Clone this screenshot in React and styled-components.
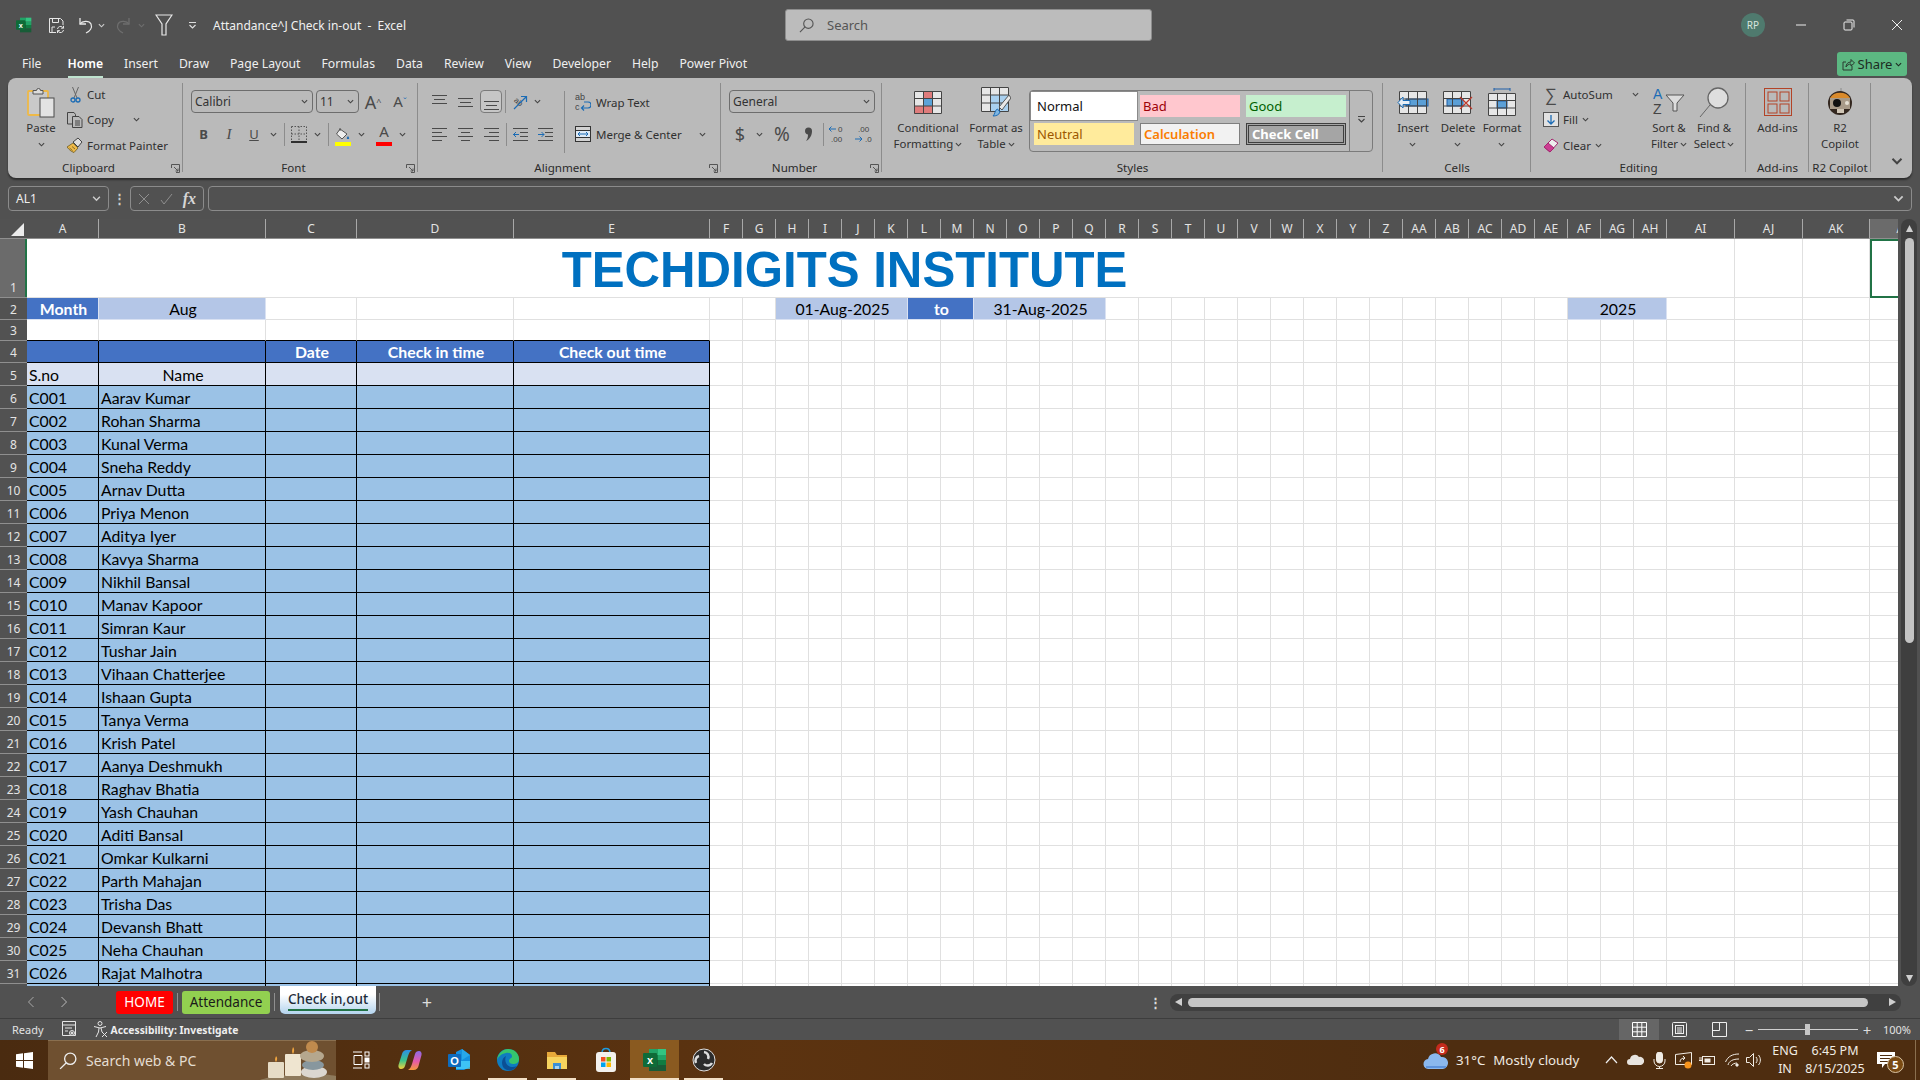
import React from 'react'
import styled, { createGlobalStyle, css } from 'styled-components'

const UI = '"Noto Sans", "Open Sans", sans-serif'
const CELL = 'Lato, "Noto Sans", sans-serif'

const GlobalStyle = createGlobalStyle`
  html, body { margin: 0; padding: 0; background: #515151; }
  * { box-sizing: border-box; }
  svg { display: block; flex: none; }
`

/* ---------- shell ---------- */
const Page = styled.div`
  width: 1920px;
  height: 1080px;
  overflow: hidden;
  display: flex;
  flex-direction: column;
  background: #515151;
  font-family: ${UI};
  font-size: 12px;
  color: #222;
`

const TitleBar = styled.header`
  height: 50px;
  flex: none;
  display: flex;
  align-items: center;
  color: #eee;
`
const Slot = styled.div`
  width: ${p => p.$w}px;
  height: ${p => p.$h || 24}px;
  margin-left: ${p => p.$ml || 0}px;
  flex: none;
  display: flex;
  align-items: center;
  justify-content: center;
  position: relative;
`
const DocTitle = styled.div`
  width: 572px;
  flex: none;
  margin-left: 15px;
  font-size: 12px;
  color: #f0f0f0;
  white-space: pre;
`
const SearchBox = styled.div`
  width: 367px;
  height: 32px;
  flex: none;
  display: flex;
  align-items: center;
  gap: 13px;
  padding-left: 13px;
  background: #bcbcbc;
  border: 1px solid #8d8d8d;
  border-radius: 3px;
  color: #555;
  font-size: 13px;
`
const Avatar = styled.div`
  width: 24px;
  height: 24px;
  flex: none;
  margin-left: 589px;
  margin-right: 12px;
  border-radius: 50%;
  background: #4f7a6e;
  color: #d8e4df;
  font-size: 10px;
  display: flex;
  align-items: center;
  justify-content: center;
`

const TabBar = styled.nav`
  height: 28px;
  flex: none;
  display: flex;
  align-items: center;
  gap: 21px;
  padding-left: 22px;
  padding-right: 13px;
  font-size: 12.2px;
  color: #efefef;
`
const Tab = styled.div`
  position: relative;
  line-height: 24px;
  ${p => p.$active && css`
    margin-left: 5px;
    color: #fff;
    font-weight: 600;
    &::after {
      content: '';
      position: absolute;
      left: 0;
      right: 0;
      bottom: -2px;
      height: 2px;
      background: #bfe3cf;
    }
  `}
`
const ShareButton = styled.div`
  margin-left: auto;
  width: 70px;
  height: 24px;
  display: flex;
  align-items: center;
  justify-content: center;
  gap: 3px;
  border-radius: 3px;
  background: #5cb882;
  color: #1d2b22;
  font-size: 13px;
`

/* ---------- ribbon ---------- */
const Ribbon = styled.section`
  width: 1904px;
  height: 100px;
  margin-left: 8px;
  flex: none;
  display: flex;
  background: #bababa;
  border-radius: 8px;
  box-shadow: 0 2px 2px rgba(0, 0, 0, 0.45);
`
const Group = styled.div`
  position: relative;
  width: ${p => p.$w}px;
  flex: none;
  display: flex;
  flex-direction: column;
  &::after {
    content: '';
    position: absolute;
    right: 0;
    top: 5px;
    bottom: 6px;
    width: 1px;
    background: #8c8c8c;
  }
`
const GroupBody = styled.div`
  flex: 1;
  min-height: 0;
  display: flex;
  padding-left: ${p => p.$pl || 0}px;
  padding-top: ${p => p.$pt ?? 12}px;
`
const GroupLabel = styled.div`
  height: 20px;
  flex: none;
  text-align: center;
  line-height: 20px;
  font-size: 11.6px;
  color: #2b2b2b;
  white-space: nowrap;
  padding-right: ${p => p.$launcher ? 14 : 0}px;
`
const Launcher = styled.div`
  position: absolute;
  right: 3px;
  bottom: 5px;
`
const Rows = styled.div`
  display: flex;
  flex-direction: column;
  gap: ${p => p.$gap ?? 9}px;
  width: ${p => (p.$w ? `${p.$w}px` : 'auto')};
  margin-left: ${p => p.$ml || 0}px;
  margin-top: ${p => p.$mt || 0}px;
  flex: none;
`
const Row = styled.div`
  height: ${p => p.$h || 23}px;
  display: flex;
  align-items: center;
`
const SelectBox = styled.div`
  width: ${p => p.$w}px;
  height: 23px;
  margin-right: ${p => p.$mr || 0}px;
  display: flex;
  align-items: center;
  justify-content: space-between;
  padding: 0 4px 0 3px;
  background: #bababa;
  border: 1px solid #6d6d6d;
  border-radius: 4px;
  color: #333;
  font-size: 12px;
`
const ToolGlyph = styled.span`
  font-family: ${p => p.$serif ? '"Liberation Serif", serif' : UI};
  font-size: ${p => p.$size || 13}px;
  font-weight: ${p => p.$bold ? 700 : 400};
  font-style: ${p => p.$italic ? 'italic' : 'normal'};
  text-decoration: ${p => p.$under ? 'underline' : 'none'};
  color: ${p => p.$color || '#4a4a4a'};
  margin-bottom: ${p => p.$mb || 0}px;
  line-height: 1;
`
const ColorBar = styled.span`
  position: absolute;
  left: 50%;
  bottom: 0;
  transform: translateX(-50%);
  width: 16px;
  height: 4px;
  background: ${p => p.$color};
`
const ActiveBox = styled(Slot)`
  border: 1px solid #7b7b7b;
  border-radius: 4px;
  background: #c6c6c6;
  margin-left: 2px;
`
const Sep = styled.div`
  width: 1px;
  height: 23px;
  background: #8c8c8c;
`
const TallDivider = styled.div`
  width: 1px;
  height: 62px;
  margin-top: 1px;
  background: #8c8c8c;
`
const SmallAction = styled.div`
  height: ${p => p.$h || 26}px;
  display: flex;
  align-items: center;
  gap: ${p => p.$gap ?? 4}px;
  white-space: nowrap;
  font-size: 11.5px;
  color: #303030;
`
const IconCell = styled.div`
  width: ${p => p.$w || 16}px;
  display: flex;
  justify-content: center;
  flex: none;
`
const BigButton = styled.div`
  width: ${p => p.$w}px;
  margin-top: ${p => p.$mt || 0}px;
  flex: none;
  display: flex;
  flex-direction: column;
  align-items: center;
`
const BigIcon = styled.div`
  height: 36px;
  display: flex;
  align-items: center;
  justify-content: center;
`
const BigLabel = styled.div`
  font-size: 11.4px;
  line-height: 16px;
  text-align: center;
  white-space: nowrap;
  color: #303030;
  display: flex;
  flex-direction: column;
  align-items: center;
`
const LabelLine = styled.span`
  display: flex;
  align-items: center;
  justify-content: center;
  gap: 2px;
  height: 16px;
`
const Gallery = styled.div`
  width: 344px;
  height: 62px;
  margin-left: 5px;
  margin-top: 6px;
  display: flex;
  border: 1px solid #7b7b7b;
  border-radius: 4px;
`
const GalleryGrid = styled.div`
  flex: 1;
  display: grid;
  grid-template-columns: repeat(3, 100px);
  grid-template-rows: repeat(2, 22px);
  gap: 6px;
  padding: 4px 0 0 4px;
`
const GalleryMore = styled.div`
  width: 23px;
  border-left: 1px solid #7b7b7b;
  display: flex;
  justify-content: center;
  padding-top: 24px;
`
const styleCells = {
  normal: css`background: #fff; color: #111; outline: 3px solid #fff; box-shadow: 0 0 0 4px #8a8a8a;`,
  bad: css`background: #ffc7ce; color: #9c0006;`,
  good: css`background: #c6efce; color: #006100;`,
  neutral: css`background: #ffeb9c; color: #9c5700;`,
  calc: css`background: #f2f2f2; color: #fa7d00; font-weight: 600; border: 1px solid #7f7f7f;`,
  check: css`background: #a5a5a5; color: #fff; font-weight: 700; border: 3px double #3f3f3f;`,
}
const StyleCell = styled.div`
  display: flex;
  align-items: center;
  padding-left: 3px;
  font-size: 13px;
  white-space: nowrap;
  ${p => styleCells[p.$kind]}
`
const CollapseCorner = styled.div`
  margin-left: 20px;
  align-self: flex-end;
  padding-bottom: 11px;
`

/* ---------- formula bar ---------- */
const FormulaBar = styled.div`
  height: 25px;
  margin: 8px;
  flex: none;
  display: flex;
  align-items: stretch;
`
const FieldBox = styled.div`
  width: ${p => (p.$w ? `${p.$w}px` : 'auto')};
  flex: ${p => (p.$w ? 'none' : '1')};
  margin-left: ${p => p.$ml || 0}px;
  display: flex;
  align-items: center;
  justify-content: space-between;
  padding: 0 7px;
  border: 1px solid #8b8b8b;
  border-radius: 4px;
  color: #eee;
  font-size: 12px;
`
const FxGlyph = styled.span`
  font-family: "Liberation Serif", serif;
  font-style: italic;
  font-weight: 700;
  font-size: 16px;
  color: #d6d6d6;
`

/* ---------- sheet ---------- */
const SheetWrap = styled.div`
  height: 767px;
  flex: none;
  display: flex;
`
const colWidths = [72, 167, 91, 157, 196, ...Array(29).fill(33), 68, 68, 67, 68]
const rowHeights = [59, 22, 21, 22, 23, ...Array(27).fill(23)]
const SheetGrid = styled.div`
  width: 1898px;
  height: 767px;
  overflow: hidden;
  display: grid;
  grid-template-columns: 27px ${colWidths.map(w => `${w}px`).join(' ')};
  grid-template-rows: 20px ${rowHeights.map(h => `${h}px`).join(' ')};
  background: #fff;
`
const Corner = styled.div`
  background: #525252;
  display: flex;
  align-items: flex-end;
  justify-content: flex-end;
  padding: 0 3px 2px 0;
  border-bottom: 1px solid #8f8f8f;
`
const ColHead = styled.div`
  display: flex;
  align-items: center;
  justify-content: center;
  background: ${p => p.$on ? '#6b6b6b' : '#525252'};
  color: #e4e4e4;
  font-size: 12px;
  border-right: 1px solid #a8a8a8;
  border-bottom: 1px solid #8f8f8f;
`
const RowHead = styled.div`
  display: flex;
  align-items: flex-end;
  justify-content: center;
  padding-bottom: 1px;
  background: ${p => p.$on ? '#6b6b6b' : '#525252'};
  color: #e4e4e4;
  font-size: 12px;
  border-bottom: 1px solid #8f8f8f;
  ${p => p.$on && css`box-shadow: inset -2px 0 0 #217346;`}
`
const cellKinds = {
  blank: css`border-right: 1px solid #e0e0e0; border-bottom: 1px solid #e0e0e0;`,
  aboveTable: css`border-right: 1px solid #e0e0e0; border-bottom: 1px solid #000;`,
  title: css`
    justify-content: center;
    padding: 2px 5px 0 0;
    font-family: "Liberation Sans", Arial, sans-serif;
    font-size: 49.2px;
    font-weight: 700;
    color: #0070c0;
    border-bottom: 1px solid #e0e0e0;
  `,
  selected: css`box-shadow: inset 0 0 0 2px #217346;`,
  head: css`background: #4472c4; color: #fff; font-weight: 700; justify-content: center; border-right: 1px solid #d9e1f2; border-bottom: 1px solid #d9e1f2;`,
  sub: css`background: #b4c6e7; color: #000; justify-content: center; border-right: 1px solid #d9e1f2; border-bottom: 1px solid #d9e1f2;`,
  tableHead: css`background: #4472c4; color: #fff; font-weight: 700; justify-content: center; border-right: 1px solid #000; border-bottom: 1px solid #000;`,
  tableSub: css`background: #d9e1f2; color: #000; border-right: 1px solid #000; border-bottom: 1px solid #000;`,
  tableSubC: css`background: #d9e1f2; color: #000; justify-content: center; border-right: 1px solid #000; border-bottom: 1px solid #000;`,
  tableBody: css`background: #9bc2e6; color: #000; border-right: 1px solid #000; border-bottom: 1px solid #000;`,
}
const Cell = styled.div`
  grid-column: span ${p => p.$span || 1};
  display: flex;
  align-items: center;
  padding-left: 2px;
  overflow: hidden;
  white-space: nowrap;
  font-family: ${CELL};
  font-size: 15.8px;
  ${p => cellKinds[p.$kind || 'blank']}
`
const VScroll = styled.div`
  width: 22px;
  flex: none;
  position: relative;
  background: #515151;
  &::before {
    content: '';
    position: absolute;
    left: 3px;
    width: 16px;
    top: 0;
    bottom: 0;
    border-radius: 8px;
    background: #3f3f3f;
  }
`
const VThumb = styled.div`
  position: absolute;
  left: 7px;
  width: 9px;
  top: 19px;
  height: 405px;
  border-radius: 5px;
  background: #c4c4c4;
`
const VArrow = styled.div`
  position: absolute;
  left: 7px;
  ${p => p.$top ? 'top: 5px;' : 'bottom: 3px;'}
`

/* ---------- sheet tabs ---------- */
const SheetTabs = styled.div`
  height: 33px;
  flex: none;
  display: flex;
  align-items: center;
  border-bottom: 1px solid #3d3d3d;
`
const TabChip = styled.div`
  width: ${p => p.$w}px;
  height: 23px;
  margin-left: ${p => p.$ml || 0}px;
  flex: none;
  display: flex;
  align-items: center;
  justify-content: center;
  border-radius: 3px;
  font-size: 13.5px;
  background: ${p => p.$bg};
  color: ${p => p.$color};
`
const ActiveSheet = styled.div`
  width: 96px;
  height: 28px;
  margin-top: -5px;
  flex: none;
  position: relative;
  display: flex;
  justify-content: center;
  padding-top: 4px;
  border-radius: 0 0 5px 5px;
  background: linear-gradient(#ffffff 30%, #b4d4ee);
  font-size: 13.5px;
  font-weight: 500;
  color: #1e2b38;
  &::after {
    content: '';
    position: absolute;
    left: 8px;
    right: 8px;
    bottom: 3px;
    height: 2px;
    background: #217346;
  }
`
const TabDivider = styled.div`
  width: 1px;
  height: 18px;
  margin: 0 ${p => p.$r ?? 4}px 0 ${p => p.$l ?? 4}px;
  background: #8f8f8f;
  flex: none;
`
const HScroll = styled.div`
  width: 731px;
  height: 17px;
  margin-left: 5px;
  flex: none;
  display: flex;
  align-items: center;
  padding: 0 4px;
  gap: 4px;
  border-radius: 8px;
  background: #404040;
`
const HThumb = styled.div`
  flex: 1;
  height: 9px;
  border-radius: 5px;
  background: #c6c6c6;
`

/* ---------- status bar ---------- */
const StatusBar = styled.footer`
  height: 21px;
  flex: none;
  display: flex;
  align-items: center;
  padding-left: 12px;
  color: #e2e2e2;
  font-size: 11px;
`
const StatusBold = styled.span`
  font-weight: 700;
  font-size: 10.3px;
  margin-left: 3px;
  color: #eee;
`
const StatusRight = styled.div`
  margin-left: auto;
  display: flex;
  align-items: center;
`
const ViewButton = styled.div`
  width: 40px;
  height: 21px;
  flex: none;
  display: flex;
  align-items: center;
  justify-content: center;
  background: ${p => p.$on ? '#666' : 'transparent'};
`
const ZoomTrack = styled.div`
  position: relative;
  width: 100px;
  height: 1px;
  margin: 0 2px;
  background: #cfcfcf;
  &::after {
    content: '';
    position: absolute;
    left: 47px;
    top: -5px;
    width: 5px;
    height: 11px;
    background: #c6c6c6;
  }
`
const ZoomSign = styled.span`
  width: 14px;
  flex: none;
  margin-left: ${p => p.$ml || 0}px;
  text-align: center;
  font-size: ${p => p.$size || 15}px;
  color: #ddd;
`

/* ---------- taskbar ---------- */
const Taskbar = styled.div`
  height: 40px;
  flex: none;
  display: flex;
  align-items: stretch;
  background: linear-gradient(90deg, #4a2b10, #5c3310 40%, #4e2d10 75%);
  color: #eee;
`
const StartButton = styled.div`
  width: 48px;
  flex: none;
  display: flex;
  align-items: center;
  justify-content: center;
`
const TaskSearch = styled.div`
  width: 288px;
  flex: none;
  position: relative;
  overflow: hidden;
  display: flex;
  align-items: center;
  gap: 9px;
  padding-left: 11px;
  background: #6f5030;
  border-top: 1px solid #8a6f4f;
  font-size: 14px;
  color: #e4ddd2;
`
const SearchArt = styled.div`
  position: absolute;
  right: 0;
  bottom: 0;
`
const TaskApp = styled.div`
  width: 49px;
  flex: none;
  position: relative;
  display: flex;
  align-items: center;
  justify-content: center;
  background: ${p => p.$on ? '#8a5a20' : 'transparent'};
  ${p => p.$running && css`
    &::after {
      content: '';
      position: absolute;
      left: ${p.$on ? 0 : 5}px;
      right: ${p.$on ? 0 : 5}px;
      bottom: 0;
      height: 2px;
      background: #f3e0c6;
    }
  `}
`
const WeatherText = styled.div`
  width: 130px;
  flex: none;
  margin-left: 6px;
  display: flex;
  align-items: center;
  gap: 8px;
  font-size: 13.3px;
  color: #efe9e0;
  white-space: nowrap;
`
const Badge = styled.span`
  position: absolute;
  display: flex;
  align-items: center;
  justify-content: center;
  border-radius: 50%;
  font-weight: 700;
  ${p => p.$kind === 'weather' ? css`
    left: 14px; top: 3px; width: 12px; height: 12px; font-size: 9px; background: #c42b1c; color: #fff;
  ` : css`
    left: 19px; top: 16px; width: 17px; height: 17px; font-size: 11px; background: #7a4a12; color: #fff; border: 1px solid #d9c4a5;
  `}
`
const ClockStack = styled.div`
  width: ${p => p.$w}px;
  margin-left: ${p => p.$ml || 0}px;
  flex: none;
  display: flex;
  flex-direction: column;
  justify-content: center;
  align-items: center;
  line-height: 18px;
  font-size: 12.5px;
  color: #f1ece4;
`
const DesktopEdge = styled.div`
  width: 1px;
  margin-left: 11px;
  background: #8a6f4f;
  flex: none;
`

/* ---------- icons ---------- */
const Chev = ({ c = '#444', s = 7 }) => (
  <svg width={s} height={s} viewBox="0 0 8 8"><path d="M1 2.500 4 5.500 7 2.500" fill="none" stroke={c} strokeWidth="1.3" /></svg>
)
const ExcelLogo = ({ s = 16 }) => (
  <svg width={s} height={s} viewBox="0 0 24 24">
    <path d="M6 1h9v6H6z" fill="#21a366" /><path d="M15 1h8v6h-8z" fill="#33c481" />
    <path d="M6 7h9v5H6z" fill="#107c41" /><path d="M15 7h8v5h-8z" fill="#21a366" />
    <path d="M6 12h9v5H6z" fill="#185c37" /><path d="M15 12h8v5h-8z" fill="#107c41" />
    <path d="M6 17h17v6H6z" fill="#185c37" />
    <rect x="0" y="5" width="14" height="14" rx="1" fill="#0e6b38" />
    <text x="7" y="16" textAnchor="middle" fontFamily="Liberation Sans" fontWeight="700" fontSize="11" fill="#fff">x</text>
  </svg>
)
const SaveSync = () => (
  <svg width="17" height="17" viewBox="0 0 17 17" fill="none" stroke="#e6e6e6" strokeWidth="1">
    <path d="M8 15.500H1.500V1.500h11l2.500 2.500v4" /><path d="M4.500 1.500v4h6v-4M4 15v-5h3" />
    <path d="M9.500 12a3 3 0 0 1 5-1.800l1 1M15.500 13a3 3 0 0 1-5 1.800l-1-1" /><path d="M15.500 8.800v2.400h-2.400M9.500 16v-2.400h2.400" />
  </svg>
)
const FlipBox = styled.span`
  display: block;
  transform: ${p => p.$flip ? 'scaleX(-1)' : 'none'};
`
const UndoIco = ({ c = '#e8e8e8', flip }) => (
  <FlipBox $flip={flip}>
    <svg width="16" height="17" viewBox="0 0 16 17" fill="none" stroke={c} strokeWidth="1.3">
      <path d="M3 1v6h6" /><path d="M3 7c2-3 9-4 11 0 1.500 3.500-1 7-5 9" />
    </svg>
  </FlipBox>
)
const FilterIco = ({ c = '#e8e8e8', w = 18, h = 22 }) => (
  <svg width={w} height={h} viewBox="0 0 18 22" fill="none" stroke={c} strokeWidth="1.2">
    <path d="M1 1h16l-6 9v11H7V10z" />
  </svg>
)
const QatMore = ({ c = '#ddd' }) => (
  <svg width="9" height="9" viewBox="0 0 9 9" fill="none" stroke={c} strokeWidth="1.2"><path d="M1 1.500h7M1.500 4l3 3 3-3" /></svg>
)
const Magnifier = ({ c = '#555', s = 15 }) => (
  <svg width={s} height={s} viewBox="0 0 16 16" fill="none" stroke={c} strokeWidth="1.2"><circle cx="10" cy="6" r="5" /><path d="M6.500 9.500 1 15" /></svg>
)
const WinMin = () => <svg width="12" height="12" viewBox="0 0 12 12"><path d="M1 6h10" stroke="#eee" /></svg>
const WinRestore = () => (
  <svg width="12" height="12" viewBox="0 0 12 12" fill="none" stroke="#eee"><rect x="1" y="3" width="8" height="8" rx="1" /><path d="M3.500 1H10a1 1 0 0 1 1 1v6.500" /></svg>
)
const WinClose = () => <svg width="12" height="12" viewBox="0 0 12 12"><path d="M1 1l10 10M11 1 1 11" stroke="#eee" /></svg>
const ShareIco = () => (
  <svg width="13" height="13" viewBox="0 0 13 13" fill="none" stroke="#2b3b31"><path d="M10 8v4H1V4h3" /><path d="M4 9c0-3 2-5 5-5V1.500L12.500 5 9 8V6c-2 0-4 1-5 3z" /></svg>
)
const PasteIco = () => (
  <svg width="28" height="31" viewBox="0 0 28 31">
    <rect x="1" y="4" width="20" height="24" rx="1" fill="#c9c9c9" stroke="#eeb948" strokeWidth="1.8" />
    <path d="M6 5V3.500h3.500a2 2 0 0 1 4 0H16V7H6z" fill="#dcdcdc" stroke="#555" />
    <rect x="13" y="11" width="14" height="19" fill="#e3e3e3" stroke="#4b4b4b" />
  </svg>
)
const CutIco = () => (
  <svg width="11" height="16" viewBox="0 0 11 16" fill="none">
    <path d="M2.500 0 7 11M8.500 0 4 11" stroke="#666" /><circle cx="3" cy="13" r="2" stroke="#1c6cb5" strokeWidth="1.3" /><circle cx="8" cy="13" r="2" stroke="#1c6cb5" strokeWidth="1.3" />
  </svg>
)
const CopyIco = () => (
  <svg width="16" height="16" viewBox="0 0 16 16" fill="#bababa" stroke="#444">
    <path d="M.5.500H7l1.500 2V12H.5z" /><path d="M5.500 4.500H12l3 3v8H5.500z" /><path d="M8 9h5M8 11h5M8 13h5" />
  </svg>
)
const PainterIco = () => (
  <svg width="16" height="16" viewBox="0 0 16 16">
    <path d="M0 10 6 6l5 5-4 4.500c-3-1-5-3-7-5.500z" fill="#eeb948" stroke="#6b5a22" strokeWidth=".8" />
    <path d="m6 5 5-4 4 4-4 5z" fill="#dedede" stroke="#444" />
    <path d="m2.500 11 3 2.500M5 9.500l3 2.500" stroke="#6b5a22" strokeWidth=".8" />
  </svg>
)
const LauncherIco = () => (
  <svg width="9" height="9" viewBox="0 0 9 9" fill="none" stroke="#555"><path d="M.5 4V.5h8v8H5M3 3l4 4M7 4.500V7H4.500" /></svg>
)
const BorderIco = () => (
  <svg width="16" height="17" viewBox="0 0 16 17" fill="none">
    <path d="M.5.500h15v15M.5.500v15M8 .5v15M.5 8h15" stroke="#555" strokeDasharray="1.500 1.500" /><path d="M0 16h16" stroke="#000" strokeWidth="1.500" />
  </svg>
)
const BucketIco = () => (
  <svg width="16" height="14" viewBox="0 0 16 14">
    <path d="M5 2 1.500 7 7 12l5-5z" fill="#eee" stroke="#555" /><path d="M5 4V1" stroke="#555" /><path d="M13 9c1 1.500 1.500 2 1 3h-2c-.5-1 0-1.500 1-3z" fill="#1c6cb5" />
  </svg>
)
const CommaIco = () => (
  <svg width="9" height="14" viewBox="0 0 9 14"><path d="M1 4a3.500 3.500 0 1 1 7 0c0 4-2 8-6 10 1.500-2 2-4 2-6.500C2.500 7.500 1 6 1 4z" fill="#4a4a4a" /></svg>
)
const AlignV = ({ pos }) => {
  const y = { top: [2, 6, 10], mid: [5, 9, 13], bot: [8, 12, 16] }[pos]
  return (
    <svg width="15" height="18" viewBox="0 0 15 18" stroke="#4a4a4a"><path d={`M0 ${y[0]}.5h15M2 ${y[1]}.5h11M0 ${y[2]}.5h15`} /></svg>
  )
}
const AlignH = ({ pos }) => {
  const d = {
    left: 'M0 1.500h15M0 5.500h10M0 9.500h15M0 13.500h10',
    center: 'M0 1.500h15M3 5.500h9M0 9.500h15M3 13.500h9',
    right: 'M0 1.500h15M5 5.500h10M0 9.500h15M5 13.500h10',
  }[pos]
  return <svg width="15" height="15" viewBox="0 0 15 15" stroke="#4a4a4a"><path d={d} /></svg>
}
const OrientIco = () => (
  <svg width="16" height="16" viewBox="0 0 16 16" fill="none">
    <text x="4" y="8" fontSize="8" fontFamily="Liberation Sans" fill="#444" transform="rotate(40 4 4)">ab</text>
    <path d="M2 15 14 3M9 2.500h5.500V8" stroke="#1c6cb5" strokeWidth="1.2" />
  </svg>
)
const WrapIco = () => (
  <svg width="16" height="20" viewBox="0 0 16 20" fill="none">
    <text x="0" y="8.200" fontSize="9" fontFamily="Liberation Sans" fill="#444">ab</text>
    <text x="0" y="18.200" fontSize="9" fontFamily="Liberation Sans" fill="#444">c</text>
    <path d="M7 16h6a2.500 2.500 0 0 0 0-6H9M9 13.500 6.500 16 9 18.500" stroke="#1c6cb5" strokeWidth="1.200" />
  </svg>
)
const MergeIco = () => (
  <svg width="16" height="16" viewBox="0 0 16 16" fill="none" stroke="#333">
    <rect x=".5" y=".5" width="15" height="15" fill="#d2d2d2" /><path d="M0 4.500h16M0 11.500h16" />
    <rect x="1" y="5" width="14" height="6" fill="#dfeaf5" stroke="none" />
    <path d="M3 8h10M5 6 3 8l2 2M11 6l2 2-2 2" stroke="#1c6cb5" />
  </svg>
)
const IndentIco = ({ out }) => (
  <svg width="15" height="15" viewBox="0 0 15 15" fill="none">
    <path d="M0 1.500h15M7 5.500h8M7 9.500h8M0 13.500h15" stroke="#4a4a4a" />
    {out
      ? <path d="M6 7.500H0M3 5 .5 7.500 3 10" stroke="#1c6cb5" />
      : <path d="M0 7.500h6M3.500 5 6 7.500 3.500 10" stroke="#1c6cb5" />}
  </svg>
)
const DecimalIco = ({ up }) => (
  <svg width="17" height="20" viewBox="0 0 17 20" fill="none">
    {up ? (
      <>
        <path d="M8 5H1M3.500 2.500 1 5l2.500 2.500" stroke="#1c6cb5" />
        <text x="10" y="8" fontSize="8" fontFamily="Liberation Sans" fill="#444">0</text>
        <text x="3" y="18" fontSize="8" fontFamily="Liberation Sans" fill="#444">.00</text>
      </>
    ) : (
      <>
        <text x="3" y="8" fontSize="8" fontFamily="Liberation Sans" fill="#444">.00</text>
        <path d="M0 15h7M4.500 12.500 7 15l-2.500 2.500" stroke="#1c6cb5" />
        <text x="10" y="18" fontSize="8" fontFamily="Liberation Sans" fill="#444">.0</text>
      </>
    )}
  </svg>
)
const Tbl = ({ children, w = 28, h = 23 }) => (
  <svg width={w} height={h} viewBox="0 0 28 23">{children}</svg>
)
const GridLines = () => (
  <path d="M.5.500h27v22H.5zM.5 7.500h27M.5 15h27M9.500.5v22M18.500.5v22" fill="none" stroke="#444" />
)
const CondFormatIco = () => (
  <Tbl>
    <rect width="28" height="23" fill="#e6e6e6" />
    <rect x="9" y="0" width="10" height="8" fill="#df7c7c" /><rect x="0" y="15" width="19" height="8" fill="#df7c7c" />
    <rect x="9" y="8" width="10" height="7" fill="#5ba3d9" />
    <GridLines />
  </Tbl>
)
const TableFormatIco = () => (
  <svg width="30" height="30" viewBox="0 0 30 30">
    <rect width="28" height="25" fill="#e6e6e6" /><rect x="10" y="8" width="18" height="17" fill="#a9d0ef" />
    <path d="M.5.500h27v24H.5zM.5 8h27M.5 16h27M9.500.5v24M18.500.5v24" fill="none" stroke="#444" />
    <path d="M28 8 18 20l3 3L30 11z" fill="#e8e8e8" stroke="#555" /><path d="M12 29c3 0 6-1 7-4l-2.500-3c-3 1-2 5-4.500 7z" fill="#7db6e3" stroke="#1c6cb5" />
  </svg>
)
const InsertCellsIco = () => (
  <svg width="32" height="23" viewBox="0 0 32 23">
    <rect x="2" width="28" height="23" fill="#e6e6e6" />
    <rect x="9" y="8" width="22" height="7" fill="#5b9fd6" stroke="#1f5fa8" />
    <path d="M2.500.500h27v22h-27zM2.500 8h27M2.500 15h27M11.500.5v22M20.500.5v22" fill="none" stroke="#444" />
    <path d="M13 9.500H6V6l-5 5.500L6 17v-3.500h7z" fill="#e6eef6" stroke="#1c6cb5" />
  </svg>
)
const DeleteCellsIco = () => (
  <svg width="30" height="23" viewBox="0 0 30 23">
    <rect width="28" height="23" fill="#e6e6e6" /><rect x="4" y="8" width="16" height="7" fill="#5b9fd6" stroke="#1f5fa8" />
    <GridLines />
    <path d="M17 6l12 12M29 6 17 18" stroke="#c0392b" strokeWidth="1.200" />
  </svg>
)
const FormatCellsIco = () => (
  <svg width="28" height="28" viewBox="0 0 28 28">
    <path d="M6 1h16M6 0v3M22 0v3" stroke="#1f5fa8" fill="none" />
    <g transform="translate(0 5)">
      <rect width="28" height="23" fill="#e6e6e6" />
      <rect x="9" y="8" width="10" height="7" fill="#5b9fd6" stroke="#1f5fa8" />
      <GridLines />
    </g>
  </svg>
)
const FillIco = () => (
  <svg width="16" height="15" viewBox="0 0 16 15" fill="none">
    <rect x=".5" y=".5" width="15" height="14" fill="#e2e2e2" stroke="#555" />
    <path d="M8 3v9M4.500 8.500 8 12l3.500-3.500" stroke="#1c6cb5" strokeWidth="1.300" />
  </svg>
)
const EraserIco = () => (
  <svg width="16" height="16" viewBox="0 0 16 16">
    <path d="M1 10 9 2l6 4-8 9z" fill="#eee" stroke="#a4276f" /><path d="m1 10 4-4 6 5-4 4z" fill="#cc3d92" stroke="#a4276f" />
  </svg>
)
const SortIco = () => (
  <svg width="32" height="32" viewBox="0 0 32 32" fill="none">
    <text x="0" y="12.700" fontSize="14" fontFamily="Liberation Sans" fill="#1c6cb5">A</text>
    <text x="0" y="28.400" fontSize="14" fontFamily="Liberation Sans" fill="#444">Z</text>
    <path d="M13 9h18l-7 8v8h-4v-8z" fill="#dcdcdc" stroke="#555" />
  </svg>
)
const FindIco = () => (
  <svg width="30" height="31" viewBox="0 0 30 31" fill="none">
    <circle cx="19" cy="11" r="10" fill="#dedede" stroke="#666" strokeWidth="1.300" /><path d="M11 18 1 30" stroke="#666" />
  </svg>
)
const AddinsIco = () => (
  <svg width="28" height="28" viewBox="0 0 28 28" fill="none" stroke="#b34327">
    <rect x=".5" y=".5" width="27" height="27" /><rect x="4" y="4" width="9" height="9" /><rect x="16" y="4" width="9" height="9" />
    <rect x="4" y="16" width="9" height="9" /><rect x="16" y="16" width="9" height="9" />
  </svg>
)
const RobotIco = () => (
  <svg width="26" height="28" viewBox="0 0 26 28">
    <path d="M14 0v5" stroke="#8a8a8a" />
    <circle cx="13" cy="15" r="12" fill="#33271f" />
    <path d="M3 10a11 9 0 0 1 20 0z" fill="#d98a2b" />
    <rect x="3" y="10" width="20" height="11" fill="#a89a88" />
    <circle cx="10" cy="15" r="4" fill="#111" /><circle cx="20" cy="15" r="2" fill="#e6e0d4" />
    <rect x="10" y="21" width="7" height="4" fill="#cfc5b5" />
  </svg>
)
const SheetCornerIco = () => (
  <svg width="13" height="13" viewBox="0 0 13 13"><path d="M13 0v13H0z" fill="#ececec" /></svg>
)
const NavArrow = ({ dir, c = '#aaa' }) => (
  <svg width="8" height="12" viewBox="0 0 8 12" fill="none" stroke={c}><path d={dir === 'l' ? 'M6.500 1 1.500 6l5 5' : 'M1.500 1l5 5-5 5'} /></svg>
)
const Tri = ({ dir, c = '#cfcfcf', s = 9 }) => {
  const d = { u: 'M5 1 9 9H1z', d: 'M1 1h8L5 9z', l: 'M8 1v8L1 5z', r: 'M2 1v8l7-4z' }[dir]
  return <svg width={s} height={s} viewBox="0 0 10 10"><path d={d} fill={c} /></svg>
}
const MacroIco = () => (
  <svg width="14" height="17" viewBox="0 0 14 17" fill="none" stroke="#e6e6e6">
    <path d="M.5.500h13v14H.5zM.5 4h13M3 7h7M3 10h3" /><circle cx="10" cy="12" r="2.500" fill="#515151" /><circle cx="10" cy="12" r="1" fill="#e6e6e6" />
  </svg>
)
const A11yIco = () => (
  <svg width="15" height="17" viewBox="0 0 15 17" fill="none" stroke="#e6e6e6">
    <circle cx="7" cy="2.500" r="2" /><path d="M1 5.500 7 7l6-1.500M6 7l-.5 4L3 16M8 7l1 4" /><path d="m9 11 5 5M14 11l-5 5" />
  </svg>
)
const ViewNormal = () => (
  <svg width="15" height="15" viewBox="0 0 15 15" fill="none" stroke="#fff"><path d="M.5.500h14v14H.5zM.5 5.200h14M.5 9.800h14M5.200.5v14M9.800.5v14" /></svg>
)
const ViewPage = () => (
  <svg width="15" height="15" viewBox="0 0 15 15" fill="none" stroke="#eee"><rect x=".5" y=".5" width="14" height="14" rx="1" /><rect x="3.500" y="3.500" width="8" height="8" /><path d="M5 6h5M5 8h5M5 10h5" /></svg>
)
const ViewBreak = () => (
  <svg width="15" height="15" viewBox="0 0 15 15" fill="none" stroke="#eee"><path d="M.5.500h14v14H.5zM.5 8.500h7V.5" /></svg>
)
const WinLogo = () => (
  <svg width="17" height="17" viewBox="0 0 17 17" fill="#fff"><path d="M0 2.300 7 1.300v6.700H0zM8 1.200 17 0v8H8zM0 9h7v6.700L0 14.700zM8 9h9v8l-9-1.200z" /></svg>
)
const CandlesArt = () => (
  <svg width="76" height="40" viewBox="0 0 76 40">
    <path d="M0 40c15-6 60-8 76-4v4z" fill="#8e7a5c" />
    <rect x="8" y="22" width="16" height="16" rx="1" fill="#e6dcc6" /><rect x="25" y="14" width="16" height="22" rx="1" fill="#efe5d0" />
    <path d="M16 22c-2-3 0-5 0-6 1 1 2 3 0 6zM33 14c-2-3 0-6 0-7 1 1 2 4 0 7z" fill="#f0a540" />
    <ellipse cx="54" cy="32" rx="13" ry="6" fill="#dbd7d0" />
    <ellipse cx="53" cy="25" rx="11" ry="5" fill="#88979e" />
    <ellipse cx="52" cy="16" rx="12" ry="6" fill="#b5a78e" />
    <circle cx="52" cy="7" r="6" fill="#c08a4d" />
  </svg>
)
const TaskViewIco = () => (
  <svg width="18" height="18" viewBox="0 0 18 18" fill="none" stroke="#fff"><path d="M1 1h9M1 17h9M2 4.500h8v9H2z" /><rect x="13" y="1" width="4" height="4" /><rect x="13" y="7" width="4" height="4" fill="#fff" /><rect x="13" y="13" width="4" height="4" /></svg>
)
const CopilotIco = () => (
  <svg width="24" height="24" viewBox="0 0 24 24">
    <defs>
      <linearGradient id="cpA" x1="0" y1="0" x2="0" y2="1"><stop offset="0" stopColor="#2a8fe8" /><stop offset=".55" stopColor="#3cc48a" /><stop offset="1" stopColor="#f4d23a" /></linearGradient>
      <linearGradient id="cpB" x1="0" y1="0" x2="0" y2="1"><stop offset="0" stopColor="#8a6be8" /><stop offset=".55" stopColor="#e65aa8" /><stop offset="1" stopColor="#f59a3a" /></linearGradient>
    </defs>
    <path d="M9 2h5c-2 1-3 3-4 6l-3 10c-.5 2-2 3-4 3-2 0-3-2-2.500-4L4 6c.5-2 2-4 5-4z" fill="url(#cpA)" />
    <path d="M15 22h-5c2-1 3-3 4-6l3-10c.5-2 2-3 4-3 2 0 3 2 2.500 4l-3 11c-.5 2-2 4-5 4z" fill="url(#cpB)" />
  </svg>
)
const OutlookIco = () => (
  <svg width="24" height="24" viewBox="0 0 24 24">
    <path d="M9 4 15 1l8 6v12l-6 3H9z" fill="#1490df" /><path d="M15 1l8 6-8 5z" fill="#28a8ea" /><path d="M9 13h14v8H9z" fill="#50d9ff" opacity=".7" />
    <rect x="1" y="6" width="13" height="13" rx="1" fill="#0f6cbd" />
    <text x="7.500" y="16.500" textAnchor="middle" fontFamily="Liberation Sans" fontWeight="700" fontSize="11" fill="#fff">O</text>
  </svg>
)
const EdgeIco = () => (
  <svg width="24" height="24" viewBox="0 0 24 24">
    <circle cx="12" cy="12" r="11" fill="#0f7cc0" />
    <path d="M1 12C2 5 7 1 12 1c6 0 11 4 11 10 0 4-3 5-6 5-2 0-4-1-4-3 0-3 3-2 3-5 0-2-3-4-6-3-5 1-8 4-9 7z" fill="#35c46e" />
    <path d="M10 8c-4 2-5 7-3 11 2 3 6 4 9 3 2-1 4-2 5-4-4 2-9 1-11-3-1-2-1-5 0-7z" fill="#0b4f94" />
  </svg>
)
const FolderIco = () => (
  <svg width="24" height="24" viewBox="0 0 24 24">
    <path d="M2 4h8l2 3h10v14H2z" fill="#e8a93a" /><path d="M2 9h20v12H2z" fill="#f7d35e" /><path d="M8 15h8v6H8z" fill="#3b8ed6" /><path d="M10 18h4v3h-4z" fill="#a6d3f4" />
  </svg>
)
const StoreIco = () => (
  <svg width="24" height="26" viewBox="0 0 24 26">
    <path d="M8 6c0-6 8-6 8 0" fill="none" stroke="#1e9be0" strokeWidth="1.500" />
    <rect x="2" y="5" width="20" height="20" rx="3" fill="#f3f1ed" />
    <rect x="7" y="10" width="4.500" height="4.500" fill="#f25022" /><rect x="12.500" y="10" width="4.500" height="4.500" fill="#7fba00" />
    <rect x="7" y="15.500" width="4.500" height="4.500" fill="#00a4ef" /><rect x="12.500" y="15.500" width="4.500" height="4.500" fill="#ffb900" />
  </svg>
)
const ObsIco = () => (
  <svg width="24" height="24" viewBox="0 0 24 24" fill="none">
    <circle cx="12" cy="12" r="11" fill="#2c2c2c" stroke="#ddd" />
    <path d="M12 4a5 5 0 0 1 4 7M20 15a5 5 0 0 1-8 1M4 15a5 5 0 0 1 3-7" stroke="#ddd" strokeWidth="2.500" />
    <circle cx="12" cy="12" r="2.500" fill="#2c2c2c" />
  </svg>
)
const CloudSunIco = () => (
  <svg width="26" height="20" viewBox="0 0 26 20">
    <path d="M6 19a5 5 0 0 1-1-10 7 7 0 0 1 13-2 6 6 0 0 1 2 12z" fill="#8bb8ee" />
    <path d="M3 17h20" stroke="#5e93dc" strokeWidth="2" />
  </svg>
)
const OneDriveIco = () => (
  <svg width="17" height="12" viewBox="0 0 17 12"><path d="M3 11a3 3 0 0 1 0-6 5 5 0 0 1 9-2 3.500 3.500 0 0 1 2 8z" fill="#e8e4df" /></svg>
)
const MicIco = () => (
  <svg width="13" height="17" viewBox="0 0 13 17" fill="none" stroke="#f1ece4">
    <rect x="3.500" y="0" width="6" height="11" rx="3" fill="#f1ece4" /><path d="M1 7v2a5.500 5.500 0 0 0 11 0V7M6.500 14.500V17M3 16.500h7" />
  </svg>
)
const DisplayIco = () => (
  <svg width="17" height="17" viewBox="0 0 17 17" fill="none" stroke="#f1ece4">
    <path d="M.5 2.500 16.500.5v12H.5z" /><path d="M5 10c0-3 2-4 5-4M8 4l2 2-2 2" />
    <circle cx="13" cy="13" r="3.500" fill="#f7941d" stroke="none" />
  </svg>
)
const BatteryIco = () => (
  <svg width="16" height="12" viewBox="0 0 16 12" fill="none" stroke="#f1ece4">
    <rect x="3.500" y="2.500" width="12" height="8" /><rect x="6" y="5" width="5" height="3" fill="#f1ece4" /><path d="M0 6.500h3M1 3v3M3 3v3" />
  </svg>
)
const WifiIco = () => (
  <svg width="15" height="14" viewBox="0 0 15 14" fill="none" stroke="#f1ece4">
    <path d="M.5 9C3 3 8 1 14 1M3 12c1-4 5-6 11-6M6 13c1-2 4-3 6-3" />
    <circle cx="12" cy="12" r="1.200" fill="#f1ece4" />
  </svg>
)
const SpeakerIco = () => (
  <svg width="16" height="14" viewBox="0 0 16 14" fill="none" stroke="#f1ece4">
    <path d="M.5 4.500h3l4-4v13l-4-4h-3z" /><path d="M10 4c1.500 2 1.500 4 0 6M12.500 2c2.500 3 2.500 7 0 10" />
  </svg>
)
const TrayUp = () => (
  <svg width="13" height="8" viewBox="0 0 13 8" fill="none" stroke="#eee" strokeWidth="1.200"><path d="M1 7 6.500 1 12 7" /></svg>
)
const ChatIco = () => (
  <svg width="18" height="16" viewBox="0 0 18 16"><path d="M0 0h18v12H8l-3 4v-4H0z" fill="#fff" /><path d="M3 3.500h12M3 6.500h12M3 9.500h8" stroke="#4e2d10" /></svg>
)
const XMark = () => (
  <svg width="12" height="12" viewBox="0 0 12 12"><path d="M1 1l10 10M11 1 1 11" stroke="#8f8f8f" /></svg>
)
const CheckMark = () => (
  <svg width="13" height="12" viewBox="0 0 13 12" fill="none"><path d="M1 7l3 4 8-10" stroke="#8f8f8f" /></svg>
)

/* ---------- data ---------- */
const people = [
  'Aarav Kumar', 'Rohan Sharma', 'Kunal Verma', 'Sneha Reddy', 'Arnav Dutta', 'Priya Menon', 'Aditya Iyer',
  'Kavya Sharma', 'Nikhil Bansal', 'Manav Kapoor', 'Simran Kaur', 'Tushar Jain', 'Vihaan Chatterjee', 'Ishaan Gupta',
  'Tanya Verma', 'Krish Patel', 'Aanya Deshmukh', 'Raghav Bhatia', 'Yash Chauhan', 'Aditi Bansal', 'Omkar Kulkarni',
  'Parth Mahajan', 'Trisha Das', 'Devansh Bhatt', 'Neha Chauhan', 'Rajat Malhotra', '',
]
const columnNames = (() => {
  const letters = 'ABCDEFGHIJKLMNOPQRSTUVWXYZ'.split('')
  return [...letters, ...'ABCDEFGHIJKL'.split('').map(l => `A${l}`)]
})()

const special = {
  1: { 0: { span: 34, kind: 'title', text: 'TECHDIGITS INSTITUTE' }, 37: { kind: 'selected' } },
  2: {
    0: { kind: 'head', text: 'Month' }, 1: { kind: 'sub', text: 'Aug' },
    7: { span: 4, kind: 'sub', text: '01-Aug-2025' }, 11: { span: 2, kind: 'head', text: 'to' },
    13: { span: 4, kind: 'sub', text: '31-Aug-2025' }, 31: { span: 3, kind: 'sub', text: '2025' },
  },
  3: { 0: { kind: 'aboveTable' }, 1: { kind: 'aboveTable' }, 2: { kind: 'aboveTable' }, 3: { kind: 'aboveTable' }, 4: { kind: 'aboveTable' } },
  4: {
    0: { kind: 'tableHead' }, 1: { kind: 'tableHead' }, 2: { kind: 'tableHead', text: 'Date' },
    3: { kind: 'tableHead', text: 'Check in time' }, 4: { kind: 'tableHead', text: 'Check out time' },
  },
  5: {
    0: { kind: 'tableSub', text: 'S.no' }, 1: { kind: 'tableSubC', text: 'Name' },
    2: { kind: 'tableSub' }, 3: { kind: 'tableSub' }, 4: { kind: 'tableSub' },
  },
}
people.forEach((name, i) => {
  const id = name ? `C${String(i + 1).padStart(3, '0')}` : ''
  special[i + 6] = {
    0: { kind: 'tableBody', text: id }, 1: { kind: 'tableBody', text: name },
    2: { kind: 'tableBody' }, 3: { kind: 'tableBody' }, 4: { kind: 'tableBody' },
  }
})

const SheetRow = ({ r }) => {
  const cells = []
  const spec = special[r] || {}
  for (let c = 0; c < columnNames.length; c++) {
    const s = spec[c]
    if (s) {
      cells.push(<Cell key={c} $span={s.span} $kind={s.kind}>{s.text}</Cell>)
      c += (s.span || 1) - 1
    } else {
      cells.push(<Cell key={c} />)
    }
  }
  return (
    <>
      <RowHead $on={r === 1}>{r}</RowHead>
      {cells}
    </>
  )
}

const Big = ({ w, icon, lines, chev = true, mt }) => (
  <BigButton $w={w} $mt={mt}>
    <BigIcon>{icon}</BigIcon>
    <BigLabel>
      {lines.map((l, i) => (
        <LabelLine key={i}>
          {l}
          {chev && i === lines.length - 1 && <Chev />}
        </LabelLine>
      ))}
    </BigLabel>
  </BigButton>
)

const BigBelow = ({ w, icon, label }) => (
  <BigButton $w={w}>
    <BigIcon>{icon}</BigIcon>
    <BigLabel>
      <LabelLine>{label}</LabelLine>
      <LabelLine><Chev /></LabelLine>
    </BigLabel>
  </BigButton>
)

const tabs = ['File', 'Home', 'Insert', 'Draw', 'Page Layout', 'Formulas', 'Data', 'Review', 'View', 'Developer', 'Help', 'Power Pivot']

export default function App() {
  const rows = Array.from({ length: 32 }, (_, i) => i + 1)
  return (
    <Page>
      <GlobalStyle />
      <TitleBar>
        <Slot $w={16} $ml={16}><ExcelLogo /></Slot>
        <Slot $w={24} $ml={12}><SaveSync /></Slot>
        <Slot $w={16} $ml={9}><UndoIco /></Slot>
        <Slot $w={12} $ml={2}><Chev c="#ccc" /></Slot>
        <Slot $w={16} $ml={9}><UndoIco c="#6e6e6e" flip /></Slot>
        <Slot $w={10} $ml={4}><Chev c="#6e6e6e" /></Slot>
        <Slot $w={18} $ml={9}><FilterIco /></Slot>
        <Slot $w={12} $ml={13}><QatMore /></Slot>
        <DocTitle>Attandance^J Check in-out  -  Excel</DocTitle>
        <SearchBox><Magnifier />Search</SearchBox>
        <Avatar>RP</Avatar>
        <Slot $w={48}><WinMin /></Slot>
        <Slot $w={48}><WinRestore /></Slot>
        <Slot $w={48}><WinClose /></Slot>
      </TitleBar>

      <TabBar>
        {tabs.map(t => <Tab key={t} $active={t === 'Home'}>{t}</Tab>)}
        <ShareButton><ShareIco />Share<Chev c="#1d2b22" /></ShareButton>
      </TabBar>

      <Ribbon>
        <Group $w={175}>
          <GroupBody $pt={6} $pl={11}>
            <BigBelow w={44} label="Paste" icon={<PasteIco />} />
            <Rows $gap={0} $ml={4} $mt={-2}>
              <SmallAction><IconCell><CutIco /></IconCell>Cut</SmallAction>
              <SmallAction><IconCell><CopyIco /></IconCell>Copy<Slot $w={38} $h={14}><Chev /></Slot></SmallAction>
              <SmallAction><IconCell><PainterIco /></IconCell>Format Painter</SmallAction>
            </Rows>
          </GroupBody>
          <GroupLabel $launcher>Clipboard</GroupLabel>
          <Launcher><LauncherIco /></Launcher>
        </Group>

        <Group $w={235}>
          <GroupBody $pl={8}>
            <Rows>
              <Row>
                <SelectBox $w={122} $mr={3}>Calibri<Chev /></SelectBox>
                <SelectBox $w={43}>11<Chev /></SelectBox>
                <Slot $w={28}><ToolGlyph $size={18}>A</ToolGlyph><ToolGlyph $size={9}>^</ToolGlyph></Slot>
                <Slot $w={26}><ToolGlyph $size={15}>A</ToolGlyph><ToolGlyph $size={9} $color="#1c6cb5">ˇ</ToolGlyph></Slot>
              </Row>
              <Row $h={24}>
                <Slot $w={25}><ToolGlyph $bold>B</ToolGlyph></Slot>
                <Slot $w={26}><ToolGlyph $italic $serif $size={15}>I</ToolGlyph></Slot>
                <Slot $w={24}><ToolGlyph $under>U</ToolGlyph></Slot>
                <Slot $w={14}><Chev /></Slot>
                <Slot $w={8}><Sep /></Slot>
                <Slot $w={21}><BorderIco /></Slot>
                <Slot $w={16}><Chev /></Slot>
                <Slot $w={6}><Sep /></Slot>
                <Slot $w={24}><BucketIco /><ColorBar $color="#ffff00" /></Slot>
                <Slot $w={12}><Chev /></Slot>
                <Slot $w={24} $ml={5}><ToolGlyph $size={15} $mb={5}>A</ToolGlyph><ColorBar $color="#ff0000" /></Slot>
                <Slot $w={12}><Chev /></Slot>
              </Row>
            </Rows>
          </GroupBody>
          <GroupLabel $launcher>Font</GroupLabel>
          <Launcher><LauncherIco /></Launcher>
        </Group>

        <Group $w={303}>
          <GroupBody $pl={8}>
            <Rows $w={138}>
              <Row>
                <Slot $w={26}><AlignV pos="top" /></Slot>
                <Slot $w={26}><AlignV pos="mid" /></Slot>
                <ActiveBox $w={22} $h={23}><AlignV pos="bot" /></ActiveBox>
                <Slot $w={6}><Sep /></Slot>
                <Slot $w={24}><OrientIco /></Slot>
                <Slot $w={10}><Chev /></Slot>
              </Row>
              <Row $h={24}>
                <Slot $w={26}><AlignH pos="left" /></Slot>
                <Slot $w={26}><AlignH pos="center" /></Slot>
                <Slot $w={26}><AlignH pos="right" /></Slot>
                <Slot $w={4}><Sep /></Slot>
                <Slot $w={24}><IndentIco out /></Slot>
                <Slot $w={26}><IndentIco /></Slot>
              </Row>
            </Rows>
            <TallDivider />
            <Rows $gap={6} $ml={9} $mt={-1}>
              <SmallAction><IconCell $w={18}><WrapIco /></IconCell>Wrap Text</SmallAction>
              <SmallAction><IconCell $w={18}><MergeIco /></IconCell>Merge &amp; Center<Slot $w={34} $h={14}><Chev /></Slot></SmallAction>
            </Rows>
          </GroupBody>
          <GroupLabel $launcher>Alignment</GroupLabel>
          <Launcher><LauncherIco /></Launcher>
        </Group>

        <Group $w={161}>
          <GroupBody $pl={8}>
            <Rows>
              <Row><SelectBox $w={146}>General<Chev /></SelectBox></Row>
              <Row $h={24}>
                <Slot $w={22}><ToolGlyph $size={18}>$</ToolGlyph></Slot>
                <Slot $w={16}><Chev /></Slot>
                <Slot $w={30}><ToolGlyph $size={19}>%</ToolGlyph></Slot>
                <Slot $w={22}><CommaIco /></Slot>
                <Slot $w={8}><Sep /></Slot>
                <Slot $w={18}><DecimalIco up /></Slot>
                <Slot $w={36}><DecimalIco /></Slot>
              </Row>
            </Rows>
          </GroupBody>
          <GroupLabel $launcher>Number</GroupLabel>
          <Launcher><LauncherIco /></Launcher>
        </Group>

        <Group $w={501}>
          <GroupBody $pt={6} $pl={6}>
            <Big w={80} icon={<CondFormatIco />} lines={['Conditional', 'Formatting']} />
            <Big w={56} icon={<TableFormatIco />} lines={['Format as', 'Table']} />
            <Gallery>
              <GalleryGrid>
                <StyleCell $kind="normal">Normal</StyleCell>
                <StyleCell $kind="bad">Bad</StyleCell>
                <StyleCell $kind="good">Good</StyleCell>
                <StyleCell $kind="neutral">Neutral</StyleCell>
                <StyleCell $kind="calc">Calculation</StyleCell>
                <StyleCell $kind="check">Check Cell</StyleCell>
              </GalleryGrid>
              <GalleryMore><QatMore c="#444" /></GalleryMore>
            </Gallery>
          </GroupBody>
          <GroupLabel>Styles</GroupLabel>
        </Group>

        <Group $w={148}>
          <GroupBody $pt={6} $pl={7}>
            <BigBelow w={46} label="Insert" icon={<InsertCellsIco />} />
            <BigBelow w={44} label="Delete" icon={<DeleteCellsIco />} />
            <BigBelow w={44} label="Format" icon={<FormatCellsIco />} />
          </GroupBody>
          <GroupLabel>Cells</GroupLabel>
        </Group>

        <Group $w={215}>
          <GroupBody $pt={4} $pl={12}>
            <Rows $gap={0} $w={102}>
              <SmallAction><IconCell><ToolGlyph $size={17}>∑</ToolGlyph></IconCell>AutoSum<Slot $w={38} $h={14}><Chev /></Slot></SmallAction>
              <SmallAction><IconCell><FillIco /></IconCell>Fill<Chev /></SmallAction>
              <SmallAction><IconCell><EraserIco /></IconCell>Clear<Chev /></SmallAction>
            </Rows>
            <BigButton $w={48} $mt={2}>
              <BigIcon><SortIco /></BigIcon>
              <BigLabel><LabelLine>Sort &amp;</LabelLine><LabelLine>Filter<Chev /></LabelLine></BigLabel>
            </BigButton>
            <BigButton $w={42} $mt={2}>
              <BigIcon><FindIco /></BigIcon>
              <BigLabel><LabelLine>Find &amp;</LabelLine><LabelLine>Select<Chev /></LabelLine></BigLabel>
            </BigButton>
          </GroupBody>
          <GroupLabel>Editing</GroupLabel>
        </Group>

        <Group $w={63}>
          <GroupBody $pt={6}>
            <Big w={63} icon={<AddinsIco />} lines={['Add-ins']} chev={false} />
          </GroupBody>
          <GroupLabel>Add-ins</GroupLabel>
        </Group>

        <Group $w={62}>
          <GroupBody $pt={6}>
            <Big w={62} icon={<RobotIco />} lines={['R2', 'Copilot']} chev={false} />
          </GroupBody>
          <GroupLabel>R2 Copilot</GroupLabel>
        </Group>

        <CollapseCorner><Chev s={12} /></CollapseCorner>
      </Ribbon>

      <FormulaBar>
        <FieldBox $w={101}>AL1<Chev c="#ccc" s={9} /></FieldBox>
        <Slot $w={21} $h={25}><ToolGlyph $color="#ccc" $bold>⋮</ToolGlyph></Slot>
        <FieldBox $w={74}>
          <XMark />
          <CheckMark />
          <FxGlyph>fx</FxGlyph>
        </FieldBox>
        <FieldBox $ml={4}>
          <span />
          <Chev c="#ccc" s={11} />
        </FieldBox>
      </FormulaBar>

      <SheetWrap>
        <SheetGrid>
          <Corner><SheetCornerIco /></Corner>
          {columnNames.map((c, i) => <ColHead key={c} $on={i === 37}>{c}</ColHead>)}
          {rows.map(r => <SheetRow key={r} r={r} />)}
        </SheetGrid>
        <VScroll>
          <VArrow $top><Tri dir="u" /></VArrow>
          <VThumb />
          <VArrow><Tri dir="d" /></VArrow>
        </VScroll>
      </SheetWrap>

      <SheetTabs>
        <Slot $w={48} $ml={7}><NavArrow dir="l" /></Slot>
        <Slot $w={18}><NavArrow dir="r" c="#bbb" /></Slot>
        <TabChip $w={57} $ml={43} $bg="#ff0000" $color="#fff">HOME</TabChip>
        <TabDivider />
        <TabChip $w={88} $bg="#92d050" $color="#1a1a1a">Attendance</TabChip>
        <TabDivider $r={5} />
        <ActiveSheet>Check in,out</ActiveSheet>
        <TabDivider $l={3} $r={0} />
        <Slot $w={94}><ZoomSign $size={18}>+</ZoomSign></Slot>
        <Slot $w={20} $ml={671}><ToolGlyph $color="#ddd" $bold>⋮</ToolGlyph></Slot>
        <HScroll>
          <Tri dir="l" s={10} />
          <HThumb />
          <Slot $w={10} $h={10} $ml={15}><Tri dir="r" s={10} /></Slot>
        </HScroll>
      </SheetTabs>

      <StatusBar>
        Ready
        <Slot $w={14} $h={18} $ml={18}><MacroIco /></Slot>
        <Slot $w={15} $h={18} $ml={17}><A11yIco /></Slot>
        <StatusBold>Accessibility: Investigate</StatusBold>
        <StatusRight>
          <ViewButton $on><ViewNormal /></ViewButton>
          <ViewButton><ViewPage /></ViewButton>
          <ViewButton><ViewBreak /></ViewButton>
          <ZoomSign $ml={3}>−</ZoomSign>
          <ZoomTrack />
          <ZoomSign>+</ZoomSign>
          <Slot $w={46}>100%</Slot>
        </StatusRight>
      </StatusBar>

      <Taskbar>
        <StartButton><WinLogo /></StartButton>
        <TaskSearch>
          <Magnifier c="#eee" s={18} />
          Search web &amp; PC
          <SearchArt><CandlesArt /></SearchArt>
        </TaskSearch>
        <TaskApp><TaskViewIco /></TaskApp>
        <TaskApp><CopilotIco /></TaskApp>
        <TaskApp><OutlookIco /></TaskApp>
        <TaskApp $running><EdgeIco /></TaskApp>
        <TaskApp $running><FolderIco /></TaskApp>
        <TaskApp><StoreIco /></TaskApp>
        <TaskApp $on $running><ExcelLogo s={24} /></TaskApp>
        <TaskApp $running><ObsIco /></TaskApp>
        <Slot $w={28} $h={40} $ml={694}><CloudSunIco /><Badge $kind="weather">6</Badge></Slot>
        <WeatherText><span>31°C</span><span>Mostly cloudy</span></WeatherText>
        <Slot $w={24} $h={40} $ml={13}><TrayUp /></Slot>
        <Slot $w={24} $h={40}><OneDriveIco /></Slot>
        <Slot $w={24} $h={40}><MicIco /></Slot>
        <Slot $w={24} $h={40}><DisplayIco /></Slot>
        <Slot $w={24} $h={40}><BatteryIco /></Slot>
        <Slot $w={26} $h={40}><WifiIco /></Slot>
        <Slot $w={18} $h={40}><SpeakerIco /></Slot>
        <ClockStack $w={40} $ml={2}><span>ENG</span><span>IN</span></ClockStack>
        <ClockStack $w={60}><span>6:45 PM</span><span>8/15/2025</span></ClockStack>
        <Slot $w={36} $h={40} $ml={3}><ChatIco /><Badge>5</Badge></Slot>
        <DesktopEdge />
      </Taskbar>
    </Page>
  )
}
